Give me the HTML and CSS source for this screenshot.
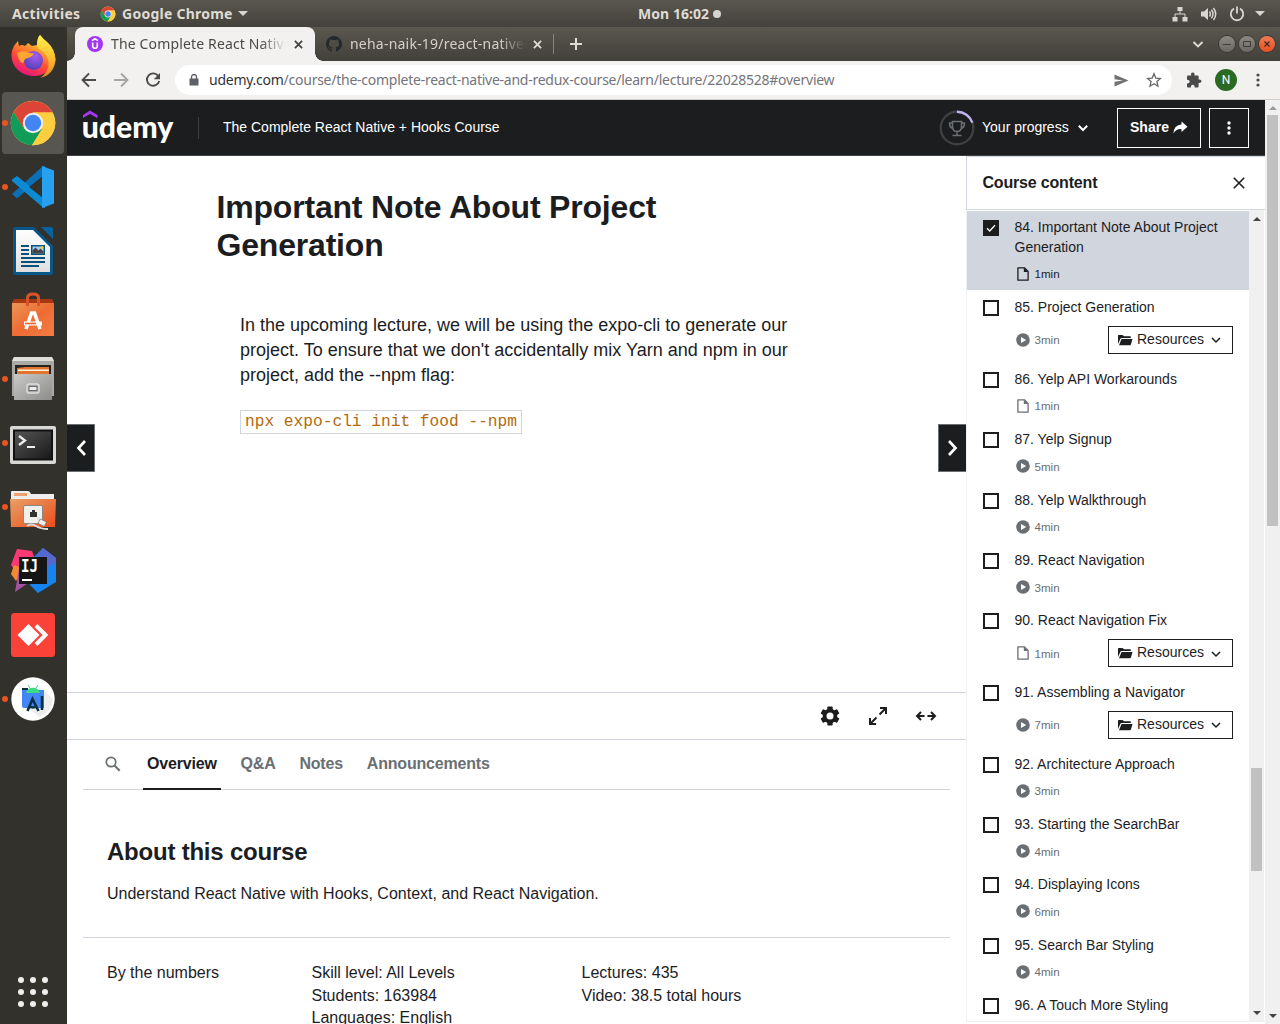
FILE: index.html
```html
<!DOCTYPE html>
<html lang="en">
<head>
<meta charset="utf-8">
<title>The Complete React Native + Hooks Course</title>
<link rel="stylesheet" href="styles.css">
</head>
<body>
<svg class="defs" width="0" height="0" aria-hidden="true">
  <defs>
    <linearGradient id="ffo" x1="0.8" y1="0" x2="0.3" y2="1"><stop offset="0" stop-color="#fff44f"/><stop offset=".35" stop-color="#ffa22b"/><stop offset=".65" stop-color="#ff4b38"/><stop offset="1" stop-color="#e3127f"/></linearGradient>
    <linearGradient id="ffy" x1="0.5" y1="0" x2="0.5" y2="1"><stop offset="0" stop-color="#fff54a"/><stop offset="1" stop-color="#ff9a22"/></linearGradient>
    <radialGradient id="ffp" cx=".6" cy=".25" r=".8"><stop offset="0" stop-color="#a65bf0"/><stop offset="1" stop-color="#4e3fb6"/></radialGradient>
    <linearGradient id="bag" x1="0" y1="0" x2="1" y2="1"><stop offset="0" stop-color="#eb9654"/><stop offset=".5" stop-color="#ee6c34"/><stop offset="1" stop-color="#f57c46"/></linearGradient>
    <linearGradient id="metal" x1="0" y1="0" x2="1" y2="1"><stop offset="0" stop-color="#c9c9c7"/><stop offset="1" stop-color="#8c8c8a"/></linearGradient>
    <linearGradient id="term" x1="0" y1="0" x2="1" y2="1"><stop offset="0" stop-color="#555"/><stop offset="1" stop-color="#191919"/></linearGradient>
    <linearGradient id="fold" x1="0" y1="0" x2="1" y2="1"><stop offset="0" stop-color="#e8a067"/><stop offset="1" stop-color="#ea4d1b"/></linearGradient>
    <linearGradient id="page" x1="0" y1="0" x2="0" y2="1"><stop offset="0" stop-color="#fff"/><stop offset="1" stop-color="#dedede"/></linearGradient>
    <symbol id="i-chrome" viewBox="0 0 48 48">
      <circle cx="24" cy="24" r="22.3" fill="#ffcd40"/>
      <path d="M4.7 13A22.3 22.3 0 0 1 43.5 13.4H24L14.5 29.5Z" fill="#db4437"/>
      <path d="M4.7 13A22.3 22.3 0 0 0 23 46.3L33.5 29.5 24 34 14.6 29.3Z" fill="#0f9d58"/>
      <path d="M24 13.4h19.5A22.3 22.3 0 0 1 23 46.3l10.5-17Z" fill="#ffcd40"/>
      <circle cx="24" cy="24" r="10.2" fill="#f1f1f1"/><circle cx="24" cy="24" r="8.2" fill="#4285f4"/>
    </symbol>
    <symbol id="i-down" viewBox="0 0 10 10"><path d="M1 3l4 4 4-4" fill="none" stroke="currentColor" stroke-width="1.5"/></symbol>
    <symbol id="i-x" viewBox="0 0 10 10"><path d="M1 1l8 8M9 1l-8 8" fill="none" stroke="currentColor" stroke-width="2"/></symbol>
    <symbol id="i-play" viewBox="0 0 14 14"><circle cx="7" cy="7" r="6.8" fill="#6a6f73"/><path d="M5 3.900v6.200L10.200 7z" fill="#fff"/></symbol>
    <symbol id="i-file" viewBox="0 0 14 14"><path d="M1.900.8h6.500l3.700 3.700v8.700H1.900z" fill="none" stroke="currentColor" stroke-width="1.300" stroke-linejoin="round"/><path d="M7.800.7l4.200 4.200H7.800z" fill="currentColor"/></symbol>
    <symbol id="i-folder" viewBox="0 0 15 12"><path d="M0 10V1.600Q0 .9.700.9H4.500l1.500 1.400h6q.8 0 .8.700V4H3.700Q2.700 4 2.300 4.900z" fill="#1c1d1f"/><path d="M3.500 5h11L12.900 10.600q-.2.600-.9.600H1z" fill="#1c1d1f"/></symbol>
  </defs>
</svg>

<header class="topbar">
  <span class="activities">Activities</span>
  <svg class="tb-chrome" width="16" height="16"><use href="#i-chrome"/></svg>
  <span class="appname">Google Chrome</span>
  <i class="tri tb-tri"></i>
  <div class="clock"><span>Mon 16:02</span><i></i></div>
  <div class="tray">
    <svg width="16" height="16" viewBox="0 0 16 16" fill="#d6d5d1"><path d="M5.500 1h5v4h-5zM.5 11h5v4.500h-5zM10.500 11h5v4.500h-5z"/><path d="M8 4v4M3 11V8h10v3" fill="none" stroke="#d6d5d1"/></svg>
    <svg width="17" height="16" viewBox="0 0 17 16"><path d="M1 5.500h3L8 2v12l-4-3.500H1z" fill="#d6d5d1"/><path d="M9.500 5.500q1.800 2.500 0 5M11.500 3.800q3 4.200 0 8.400M13.500 2q4.400 6 0 12" fill="none" stroke="#d6d5d1" stroke-width="1.500"/></svg>
    <svg width="16" height="16" viewBox="0 0 16 16"><path d="M5 2.600a6.200 6.200 0 1 0 6 0M8 .5v7" fill="none" stroke="#d6d5d1" stroke-width="1.800"/></svg>
    <i class="tri"></i>
  </div>
</header>

<div class="desktop">
<nav class="dock">
  <div class="slot"><svg viewBox="0 0 48 48"><path d="M5 11q2-3 4-5l1 5q3-2 6 0l3-3 4 3 5-1q0-7 3-10 3 4 7 7 8 7 8.500 18A22.300 20.500 0 1 1 5 11z" fill="url(#ffo)"/><path d="M28 11q0-8 3-11 3 4 7 7 8 7 8.500 18-1 14-15 18 9-7 8-16-1-8-8-12-3-2-3.500-4z" fill="url(#ffy)" opacity=".85"/><circle cx="24.500" cy="25.500" r="9.500" fill="url(#ffp)"/><path d="M8 18q6-3 11-.5 4 1 6 1-2 4-8 5-2 1-3 5-5-3-6-10.500z" fill="#ffa531"/></svg></div>
  <div class="slot active running"><svg viewBox="0 0 48 48"><use href="#i-chrome"/></svg></div>
  <div class="slot running"><svg viewBox="0 0 48 48"><path d="M3 31l5 4.500 28-24V3L34 3z" fill="#0a6fb4"/><path d="M3 16.500l5-3.500 28 22.500V45l-2-.5L3 18z" fill="#0d8ad4"/><path d="M34 13L20 24l14 11z" fill="#32312c"/><path d="M33 3l12 4.500v33L33 45z" fill="#27a0f0"/></svg></div>
  <div class="slot"><svg viewBox="0 0 48 48"><path d="M4 2q0-2 2-2h19l19 19v27q0 2-2 2H6q-2 0-2-2z" fill="#07568a"/><path d="M7 3h17l17 17v25H7z" fill="url(#page)"/><path d="M32 0h10q2 0 2 2v10z" fill="#07639c"/><g stroke="#08517d" stroke-width="2"><path d="M12 19h8M12 23h8M12 27h8M12 31h24M12 35h24M12 39h18"/></g><path d="M22 18h14v10H22z" fill="#08517d"/><path d="M23.500 19.500h11v7h-11z" fill="#a5d3ef"/><path d="M23.500 26.500v-3l3-3 3 3 2-2 3 3v2z" fill="#444"/><circle cx="33" cy="20.500" r="1.500" fill="#f5c543"/></svg></div>
  <div class="slot"><svg viewBox="0 0 48 48"><path d="M5 8h38l2 4H3z" fill="#a83713"/><path d="M3 12h42v33H3z" fill="url(#bag)"/><path d="M18.500 15V7q0-4 5.500-4t5.500 4v8" fill="none" stroke="#d9532a" stroke-width="3"/><path d="M17 38l5.500-16h3L31 38" fill="none" stroke="#fff" stroke-width="3.600"/><path d="M15 30.500h18v4H15z" fill="#fff"/><path d="M16 31.700h11v1.600H16z" fill="#ee6029"/></svg></div>
  <div class="slot running"><svg viewBox="0 0 48 48"><path d="M5 2h38l2 4v35H3V6z" fill="#a9a9a6"/><path d="M5 2h38l2 4H3z" fill="#dededa"/><path d="M6 10h36v10H6z" fill="#242424"/><path d="M8 13l8-1h24v8H8z" fill="#e0762e"/><path d="M9 14.500h31V16H9z" fill="#fff3df"/><path d="M5 19h38v26H5z" fill="url(#metal)"/><rect x="18" y="29" width="12" height="9" rx="2" fill="#aaa" stroke="#ddd" stroke-width="1.500"/><path d="M20 31.500h8v4h-8z" fill="#eee" stroke="#666"/></svg></div>
  <div class="slot running"><svg viewBox="0 0 48 48"><rect x="1" y="7" width="46" height="38" rx="2" fill="#d8d8d6"/><rect x="4" y="10.500" width="40" height="31" fill="#111"/><rect x="6" y="12.500" width="36" height="27" fill="url(#term)"/><path d="M10 17l6 4.500-6 4.500" fill="none" stroke="#eee" stroke-width="2.200"/><path d="M18 28h8" stroke="#eee" stroke-width="2"/></svg></div>
  <div class="slot running"><svg viewBox="0 0 48 48"><path d="M2 9q0-1 1-1h16q2 0 3 3h23v10H2z" fill="#eee"/><path d="M5 10h13v3H5z" fill="#eda06f"/><path d="M1 16h46l-1 28H2z" fill="url(#fold)"/><rect x="14.500" y="22.500" width="19" height="18" rx="1.500" fill="#f1f0ec" stroke="#888"/><path d="M21 34v-5h2v-2h3v2h2v5z" fill="#333"/><path d="M18 43q4-3 9 0t12 3M29 35l6 6" fill="none" stroke="#ddd" stroke-width="2"/><rect x="30" y="37" width="7" height="5" rx="1" fill="#eee" stroke="#777" stroke-width=".7" transform="rotate(25 33 39)"/></svg></div>
  <div class="slot"><svg viewBox="0 0 48 48"><path d="M8 2l15 2 5 13-24 4-2-3z" fill="#fb3a75"/><path d="M5 18l11 4-9 12-5-7z" fill="#f28a31"/><path d="M10 22l15 10-19 13z" fill="#a552a0"/><path d="M34 1l13 10v24L29 46l-8-8 4-28z" fill="#1683ef"/><path d="M34 1l13 10v4L24 30V14z" fill="#5867d0"/><path d="M10 10h28v27H10z" fill="#151515"/><path d="M13 32h10v2H13z" fill="#fff"/><text x="12" y="25" class="ij" textLength="17" lengthAdjust="spacingAndGlyphs">IJ</text></svg></div>
  <div class="slot"><svg viewBox="0 0 48 48"><rect x="2" y="2" width="44" height="44" rx="3.500" fill="#fb4238"/><path d="M8.500 24L19.500 13l11 11-11 11z" fill="#fff"/><path d="M27 14.500l9.500 9.500-9.500 9.500" fill="none" stroke="#fff" stroke-width="4"/></svg></div>
  <div class="slot running"><svg viewBox="0 0 48 48"><circle cx="24" cy="24" r="21.700" fill="#fff"/><path d="M35 15l9 9q-1 12-14 18l-11-9z" fill="#eee"/><path d="M13 13h6v5h-6z" fill="#073042"/><path d="M13 15h22v18H15q-2 0-2-2z" fill="#4285f4"/><path d="M17 18a7.200 7 0 0 1 14 0z" fill="#3ddc84"/><path d="M19 10l2 3M29 10l-2 3" stroke="#3ddc84"/><path d="M18.500 36l5-12 6 12M20 31q4 3 8 0M33 21v14" fill="none" stroke="#073042" stroke-width="2.600"/></svg></div>
  <div class="slot apps"><svg viewBox="0 0 48 48" fill="#eeeeec"><circle cx="12" cy="12" r="3"/><circle cx="24" cy="12" r="3"/><circle cx="36" cy="12" r="3"/><circle cx="12" cy="24" r="3"/><circle cx="24" cy="24" r="3"/><circle cx="36" cy="24" r="3"/><circle cx="12" cy="36" r="3"/><circle cx="24" cy="36" r="3"/><circle cx="36" cy="36" r="3"/></svg></div>
</nav>

<div class="browser">
  <div class="tabstrip">
    <div class="tab tab-on">
      <svg width="16" height="16" viewBox="0 0 16 16"><circle cx="8" cy="8" r="8" fill="#a435f0"/><path d="M5 4.600L8 2.800l3 1.800M5.700 6.500V10a2.300 2.300 0 0 0 4.600 0V6.500" fill="none" stroke="#fff" stroke-width="1.600"/></svg>
      <span class="tab-title">The Complete React Native</span>
      <svg class="tab-x" width="9" height="9"><use href="#i-x"/></svg>
    </div>
    <div class="tab tab-off">
      <svg width="16" height="16" viewBox="0 0 16 16"><path fill="#24292e" d="M8 0C3.580 0 0 3.580 0 8c0 3.540 2.290 6.530 5.470 7.590.4.070.550-.170.550-.380v-1.490c-2.010.370-2.530-.490-2.690-.940-.090-.230-.480-.940-.820-1.130-.280-.150-.680-.520-.010-.530.630-.010 1.080.580 1.230.820.720 1.210 1.870.870 2.330.660.070-.520.280-.870.510-1.070-1.780-.200-3.640-.890-3.640-3.950 0-.870.310-1.590.820-2.150-.080-.200-.360-1.020.080-2.120 0 0 .670-.210 2.200.820a7.600 7.600 0 0 1 4 0c1.530-1.040 2.200-.820 2.200-.820.440 1.100.160 1.920.080 2.120.510.560.820 1.270.820 2.150 0 3.070-1.870 3.750-3.650 3.950.290.250.540.730.540 1.480v2.190c0 .210.150.460.550.380A8 8 0 0 0 8 0z"/></svg>
      <span class="tab-title">neha-naik-19/react-native</span>
      <svg class="tab-x" width="9" height="9"><use href="#i-x"/></svg>
    </div>
    <svg class="plus" width="12" height="12" viewBox="0 0 12 12"><path d="M6 0v12M0 6h12" stroke="#dfdcd5" stroke-width="2"/></svg>
    <div class="winbtns">
      <svg width="12" height="12" viewBox="0 0 12 12"><path d="M1.500 4L6 8.500 10.500 4" fill="none" stroke="#dfdcd5" stroke-width="1.800"/></svg>
      <span class="wb"><svg width="16" height="16"><path d="M4 8.500h8" stroke="#3c3b37"/></svg></span>
      <span class="wb"><svg width="16" height="16"><path d="M4.500 5.500h7v5h-7z" fill="none" stroke="#3c3b37"/></svg></span>
      <span class="wb wb-close"><svg width="16" height="16"><path d="M5.500 5.500l5 5M10.500 5.500l-5 5" stroke="#3c2a20" stroke-width="1.200"/></svg></span>
    </div>
  </div>
  <div class="toolbar">
    <svg width="16" height="16" viewBox="0 0 16 16"><path d="M15 8H2M8 1.500L1.500 8 8 14.500" fill="none" stroke="#4a4a4a" stroke-width="1.800"/></svg>
    <svg width="16" height="16" viewBox="0 0 16 16"><path d="M1 8h13M8 1.500L14.500 8 8 14.500" fill="none" stroke="#a5a4a2" stroke-width="1.800"/></svg>
    <svg width="16" height="16" viewBox="0 0 16 16"><path d="M13.400 4.200A6.200 6.200 0 1 0 14.200 9" fill="none" stroke="#4a4a4a" stroke-width="1.900"/><path d="M15 1v6.200H8.800z" fill="#4a4a4a"/></svg>
    <div class="omnibox">
      <svg width="10" height="12" viewBox="0 0 10 12"><path d="M.5 4.500h9V11a.6.6 0 0 1-.6.600H1.100A.6.600 0 0 1 .5 11z" fill="#5c5f63"/><path d="M2.500 5V3a2.500 2.500 0 0 1 5 0v2" fill="none" stroke="#5c5f63" stroke-width="1.300"/></svg>
      <span class="url"><b>udemy.com</b>/course/the-complete-react-native-and-redux-course/learn/lecture/22028528#overview</span>
      <svg class="send" width="15" height="13" viewBox="0 0 15 13"><path d="M.5.500L14.500 6.500.5 12.500V7.700L9 6.500.5 5.300z" fill="#727272"/></svg>
      <svg width="16" height="16" viewBox="0 0 16 16"><path d="M8 1.800l1.800 4.300 4.700.4-3.600 3.100 1.100 4.600L8 11.800l-4 2.400 1.100-4.600L1.500 6.500l4.700-.4z" fill="none" stroke="#666" stroke-width="1.300"/></svg>
    </div>
    <svg class="puzzle" width="16" height="16" viewBox="0 0 16 16"><path d="M1 4.500q0-1 1-1h3.200q-.7-3 1.600-3t1.600 3h3.200q1 0 1 1v3q2.900-.3 2.900 1.700T12.600 11v3.500q0 1-1 1H8.700q.1-2.700-1.900-2.700t-1.900 2.700H2q-1 0-1-1v-3q2.700.1 2.700-1.900T1 7.700z" fill="#4a4a4a"/></svg>
    <span class="avatar">N</span>
    <svg class="kebab" width="4" height="14" viewBox="0 0 4 14" fill="#4a4a4a"><circle cx="2" cy="2" r="1.600"/><circle cx="2" cy="7" r="1.600"/><circle cx="2" cy="12" r="1.600"/></svg>
  </div>

  <div class="viewport">
  <div class="page">
    <header class="course-head">
      <svg class="logo" width="94" height="36" viewBox="0 0 94 36"><path d="M1 8V5l7-4.500L15.500 5v3.200L8 4z" fill="#a435f0"/><text x="-.3" y="28" textLength="91.500" lengthAdjust="spacingAndGlyphs">udemy</text></svg>
      <i class="vline"></i>
      <span class="course-name">The Complete React Native + Hooks Course</span>
      <svg class="trophy" width="36" height="36" viewBox="0 0 36 36"><circle cx="18" cy="18" r="16.300" fill="none" stroke="#3e4143" stroke-width="2.400"/><path d="M18 1.700A16.300 16.300 0 0 1 33.400 12.600" fill="none" stroke="#c0b2f0" stroke-width="2.400"/><path d="M13.500 11.500h9v5q0 5-4.500 5t-4.500-5zM13.500 13h-3q0 5 4 5.500M22.500 13h3q0 5-4 5.500M18 21.500V25M13.500 25.500h9" fill="none" stroke="#6a6f73" stroke-width="1.500"/></svg>
      <span class="progress">Your progress</span>
      <svg class="chev" width="10" height="10" viewBox="0 0 10 10"><path d="M.8 2.800L5 7l4.200-4.200" fill="none" stroke="#fff" stroke-width="2"/></svg>
      <span class="hbtn share">Share <svg width="15" height="13" viewBox="0 0 15 13"><path d="M8.500.5l6 5.200-6 5.200V8Q3 7.500.5 12.500.7 4 8.500 3.500z" fill="#fff"/></svg></span>
      <span class="hbtn more"><svg width="4" height="14" viewBox="0 0 4 14" fill="#fff"><circle cx="2" cy="2" r="1.700"/><circle cx="2" cy="7" r="1.700"/><circle cx="2" cy="12" r="1.700"/></svg></span>
    </header>
    <div class="columns">
      <main class="main">
        <section class="lecture">
          <h1>Important Note About Project Generation</h1>
          <p>In the upcoming lecture, we will be using the expo-cli to generate our project. To ensure that we don't accidentally mix Yarn and npm in our project, add the --npm flag:</p>
          <code>npx expo-cli init food --npm</code>
          <span class="nav prev"><svg width="12" height="18" viewBox="0 0 12 18"><path d="M10 2L3.500 9l6.500 7" fill="none" stroke="#fff" stroke-width="2.700"/></svg></span>
          <span class="nav next"><svg width="12" height="18" viewBox="0 0 12 18"><path d="M2 2l6.500 7L2 16" fill="none" stroke="#fff" stroke-width="2.700"/></svg></span>
        </section>
        <div class="controls">
          <svg width="20" height="20" viewBox="0 0 20 20"><g fill="#1c1d1f"><circle cx="10" cy="10" r="7.300"/><rect x="7.300" y=".5" width="5.400" height="19" rx="1"/><rect x="7.300" y=".5" width="5.400" height="19" rx="1" transform="rotate(60 10 10)"/><rect x="7.300" y=".5" width="5.400" height="19" rx="1" transform="rotate(120 10 10)"/></g><circle cx="10" cy="10" r="3.500" fill="#fff"/></svg>
          <svg width="20" height="20" viewBox="0 0 20 20"><path d="M12 2h6v6M17.500 2.500l-6 6M2 12v6h6M2.500 17.500l6-6" fill="none" stroke="#1c1d1f" stroke-width="2"/></svg>
          <svg width="22" height="12" viewBox="0 0 22 12"><path d="M9.500 6H2M6 2L2 6l4 4M12.500 6H20M16 2l4 4-4 4" fill="none" stroke="#1c1d1f" stroke-width="2"/></svg>
        </div>
        <nav class="tabs">
          <svg width="16" height="16" viewBox="0 0 16 16"><circle cx="6" cy="6" r="4.700" fill="none" stroke="#6a6f73" stroke-width="1.700"/><path d="M9.500 9.500l5.200 5.200" stroke="#6a6f73" stroke-width="2.100"/></svg>
          <span class="on">Overview</span><span>Q&amp;A</span><span>Notes</span><span>Announcements</span>
        </nav>
        <section class="about">
          <h2>About this course</h2>
          <p>Understand React Native with Hooks, Context, and React Navigation.</p>
        </section>
        <section class="numbers">
          <div>By the numbers</div>
          <div>Skill level: All Levels<br>Students: 163984<br>Languages: English</div>
          <div>Lectures: 435<br>Video: 38.5 total hours</div>
        </section>
      </main>
      <aside class="side">
        <div class="side-head"><span>Course content</span><svg width="12" height="12" viewBox="0 0 12 12"><path d="M.8.800l10.400 10.400M11.200.800L.8 11.200" stroke="#1c1d1f" stroke-width="1.600"/></svg></div>
        <div class="side-body">
        <div class="list">
          <div class="item current"><i class="box"><svg width="16" height="16"><path d="M4 8.300l2.700 2.700L12 5.300" fill="none" stroke="#fff" stroke-width="1.300"/></svg></i><div class="info"><div class="t">84. Important Note About Project Generation</div><div class="meta"><svg><use href="#i-file"/></svg><span>1min</span></div></div></div>
          <div class="item"><i class="box"></i><div class="info"><div class="t">85. Project Generation</div><div class="meta"><svg><use href="#i-play"/></svg><span>3min</span><b class="res"><svg class="fo"><use href="#i-folder"/></svg>Resources<svg class="dn"><use href="#i-down"/></svg></b></div></div></div>
          <div class="item"><i class="box"></i><div class="info"><div class="t">86. Yelp API Workarounds</div><div class="meta"><svg><use href="#i-file"/></svg><span>1min</span></div></div></div>
          <div class="item"><i class="box"></i><div class="info"><div class="t">87. Yelp Signup</div><div class="meta"><svg><use href="#i-play"/></svg><span>5min</span></div></div></div>
          <div class="item"><i class="box"></i><div class="info"><div class="t">88. Yelp Walkthrough</div><div class="meta"><svg><use href="#i-play"/></svg><span>4min</span></div></div></div>
          <div class="item"><i class="box"></i><div class="info"><div class="t">89. React Navigation</div><div class="meta"><svg><use href="#i-play"/></svg><span>3min</span></div></div></div>
          <div class="item"><i class="box"></i><div class="info"><div class="t">90. React Navigation Fix</div><div class="meta"><svg><use href="#i-file"/></svg><span>1min</span><b class="res"><svg class="fo"><use href="#i-folder"/></svg>Resources<svg class="dn"><use href="#i-down"/></svg></b></div></div></div>
          <div class="item"><i class="box"></i><div class="info"><div class="t">91. Assembling a Navigator</div><div class="meta"><svg><use href="#i-play"/></svg><span>7min</span><b class="res"><svg class="fo"><use href="#i-folder"/></svg>Resources<svg class="dn"><use href="#i-down"/></svg></b></div></div></div>
          <div class="item"><i class="box"></i><div class="info"><div class="t">92. Architecture Approach</div><div class="meta"><svg><use href="#i-play"/></svg><span>3min</span></div></div></div>
          <div class="item"><i class="box"></i><div class="info"><div class="t">93. Starting the SearchBar</div><div class="meta"><svg><use href="#i-play"/></svg><span>4min</span></div></div></div>
          <div class="item"><i class="box"></i><div class="info"><div class="t">94. Displaying Icons</div><div class="meta"><svg><use href="#i-play"/></svg><span>6min</span></div></div></div>
          <div class="item"><i class="box"></i><div class="info"><div class="t">95. Search Bar Styling</div><div class="meta"><svg><use href="#i-play"/></svg><span>4min</span></div></div></div>
          <div class="item"><i class="box"></i><div class="info"><div class="t">96. A Touch More Styling</div></div></div>
        </div>
        <div class="bar"><i class="up"></i><i class="thumb side-thumb"></i><i class="dw"></i></div>
        </div>
      </aside>
    </div>
  </div>
  <div class="bar page-bar"><i class="up dim"></i><i class="thumb page-thumb"></i><i class="dw"></i></div>
  </div>
</div>
</div>
</body>
</html>
```
FILE: styles.css
```css
* { box-sizing: border-box; }
html, body { margin: 0; height: 1024px; overflow: hidden; }
body { width: 1280px; font-family: "Liberation Sans", Arial, sans-serif; color: #1c1d1f; background: #fff; }
svg { display: block; flex: none; }
i { flex: none; font-style: normal; }
h1, h2, p { margin: 0; }
.defs { position: absolute; }

/* system bar */
.topbar { height: 27px; display: flex; align-items: center; background: linear-gradient(#5a574f, #43413b); color: #dfdbd2; font: bold 14px/27px "Noto Sans", sans-serif; padding: 0 12px; white-space: nowrap; }
.activities { width: 88px; letter-spacing: 0.350px; }
.appname { width: 112px; margin-left: 6px; letter-spacing: 0.250px; }
.tri { border: 5px solid transparent; border-top-color: #d6d5d1; border-bottom: 0; }
.tb-tri { margin-left: 4px; }
.clock { margin-left: 390px; display: flex; align-items: center; width: 90px; gap: 4px; }
.clock span { width: 71px; letter-spacing: 0.050px; }
.clock i { width: 8px; height: 8px; border-radius: 50%; background: #d6d5d1; }
.tray { margin-left: auto; display: flex; align-items: center; gap: 12px; margin-right: 3px; }
.tray .tri { margin-left: -2px; }

/* launcher */
.desktop { display: flex; height: 997px; }
.dock { width: 67px; background: #32312c; display: flex; flex-direction: column; }
.slot { position: relative; height: 64px; display: flex; align-items: center; justify-content: center; padding-right: 1px; }
.slot svg { width: 48px; height: 48px; }
.slot.active { background: #575651; margin: 1px 3px 1px 2px; padding: 0; height: 62px; border-radius: 4px; }
.running::before { content: ""; position: absolute; left: 2px; top: 29px; width: 6px; height: 6px; border-radius: 50%; background: #e95420; }
.active.running::before { left: 0; top: 28px; }
.apps { margin-top: auto; }
.ij { font: bold 17px "DejaVu Sans Mono", monospace; fill: #fff; }

/* browser frame */
.browser { flex: 1; display: flex; flex-direction: column; min-width: 0; }
.tabstrip { height: 34px; display: flex; align-items: stretch; padding-left: 8px; background: linear-gradient(#5a574f, #42403a); font: 14px/34px "Noto Sans", sans-serif; }
.tab { display: flex; align-items: center; width: 240px; padding-left: 12px; position: relative; color: #4c4a46; }
.tab-on { background: #f2f1f0; border-radius: 8px 8px 0 0; }
.tab-on::before, .tab-on::after { content: ""; position: absolute; bottom: 0; width: 8px; height: 8px; }
.tab-on::before { left: -8px; background: radial-gradient(circle at 0 0, transparent 7.5px, #f2f1f0 8px); }
.tab-on::after { right: -8px; background: radial-gradient(circle at 100% 0, transparent 7.5px, #f2f1f0 8px); }
.tab-title { width: 175px; margin-left: 8px; overflow: hidden; white-space: nowrap; letter-spacing: 0.150px; -webkit-mask-image: linear-gradient(90deg, #000 150px, transparent 175px); mask-image: linear-gradient(90deg, #000 150px, transparent 175px); }
.tab-x { margin-left: 8px; color: #454440; }
.tab-off { color: #d5d1c8; width: 239px; padding-left: 11px; }
.tab-off .tab-title { letter-spacing: 0.220px; }
.tab-off::after { content: ""; position: absolute; right: 0; top: 7px; height: 20px; width: 1px; background: #87847c; }
.tab-off .tab-x { color: #dfdcd5; }
.plus { margin: 11px 0 0 16px; }
.winbtns { margin-left: auto; display: flex; align-items: center; gap: 4px; padding-right: 5px; }
.winbtns > svg { margin-right: 11px; }
.wb { width: 16px; height: 16px; border-radius: 50%; background: linear-gradient(#8b8982, #6a6861); box-shadow: 0 0 0 1px #3a3934; }
.wb-close { background: linear-gradient(#f27b55, #e65020); }

.toolbar { height: 39px; background: #f2f1f0; border-bottom: 1px solid #d0cfce; display: flex; align-items: center; padding: 0 20px 0 14px; }
.toolbar > svg:nth-child(-n+3) { margin-right: 16px; }
.omnibox { width: 997px; height: 30px; margin-left: -2px; border-radius: 15px; background: #fff; display: flex; align-items: center; padding: 0 10px 0 14px; }
.url { margin-left: 10px; font: 14px/30px "Noto Sans", sans-serif; color: #74747a; white-space: nowrap; letter-spacing: -0.252px; }
.url b { font-weight: normal; color: #333; }
.send { margin-left: auto; margin-right: 17px; }
.puzzle { margin-left: 14px; }
.avatar { width: 22px; height: 22px; margin-left: 13px; border-radius: 50%; background: #2b6a23; color: #fff; font: 12px/22px Roboto, sans-serif; text-align: center; }
.kebab { margin-left: auto; }

/* course page */
.viewport { display: flex; height: 924px; }
.page { width: 1198px; }
.course-head { height: 56px; background: #1c1d1f; border-bottom: 1px solid #3e4143; color: #fff; display: flex; align-items: center; padding: 0 16px 0 15px; font-size: 14px; white-space: nowrap; }
.logo text { font: 900 31px Lato, sans-serif; fill: #fff; }
.vline { width: 1px; height: 22px; background: #3e4143; margin: 0 24px 0 22px; }
.course-name, .progress { padding-bottom: 2px; }
.trophy { margin-left: auto; }
.progress { margin-left: 7px; width: 88px; }
.chev { margin: 1px 29px 0 8px; }
.hbtn { height: 40px; border: 1px solid #fff; display: flex; align-items: center; justify-content: center; font-weight: bold; }
.share { width: 84px; gap: 4px; margin-right: 8px; padding-bottom: 1px; }
.more { width: 40px; }

.columns { display: flex; height: 868px; overflow: hidden; }
.main { width: 899px; }
.lecture { height: 536px; position: relative; padding: 32px 0 0 173px; }
h1 { margin-left: -23.500px; width: 480px; font-size: 32px; line-height: 38.400px; letter-spacing: -0.190px; }
.lecture p { margin-top: 48px; width: 575px; font-size: 18px; line-height: 25.200px; }
.lecture code { display: inline-block; margin-top: 22px; height: 24px; padding: 0 4px; border: 1px solid #d1d7dc; color: #b4690e; font: 16.200px/22px "Liberation Mono", monospace; white-space: nowrap; }
.nav { position: absolute; top: 268px; width: 28px; height: 48px; background: #1c1d1f; border: 1px solid #6a6f73; display: flex; align-items: center; justify-content: center; }
.prev { left: 0; border-left: 0; }
.next { right: 0; border-right: 0; }
.controls { height: 48px; border: solid #d1d5de; border-width: 1px 0; display: flex; align-items: center; justify-content: flex-end; gap: 28px; padding-right: 29px; }
.controls svg:last-child { margin-left: -1px; }
.tabs { height: 50px; margin: 0 16px; border-bottom: 1px solid #d1d5db; display: flex; padding-left: 22px; font-size: 16px; font-weight: bold; color: #6a6f73; line-height: 47px; letter-spacing: -0.190px; }
.tabs svg { margin: 16px 22px 0 0; }
.tabs span { padding: 0 4px; margin-right: 15.900px; height: 50px; }
.tabs .on { color: #1c1d1f; border-bottom: 2px solid #1c1d1f; }
.about { height: 148px; margin: 0 16px; padding: 47px 24px 0; border-bottom: 1px solid #d1d7dc; }
h2 { font-size: 24px; line-height: 29px; letter-spacing: -0.220px; }
.about p { margin-top: 17px; font-size: 16px; line-height: 22.400px; }
.numbers { display: flex; margin: 0 16px; padding: 24.400px 24px 0; font-size: 16px; line-height: 22.400px; white-space: nowrap; }
.numbers div { width: 270px; }
.numbers div:first-child { width: 204.500px; }

/* curriculum */
.side { width: 299px; border: 1px solid #f0f1f3; border-right: 0; height: 866px; }
.side-head { height: 54px; margin: -1px 0 0 -1px; border: 1px solid #d1d7dc; border-right: 0; display: flex; align-items: center; justify-content: space-between; padding: 0 20px 0 15.500px; font-weight: bold; font-size: 16px; letter-spacing: -0.180px; }
.side-body { display: flex; height: 811px; overflow: hidden; }
.list { width: 282px; padding-top: 0.300px; }
.item { display: flex; padding: 8px 16px; }
.current { background: #d1d5de; border-top: 1px solid #fff; padding-top: 7px; }
.box { width: 16px; height: 16px; margin-top: 2px; border: 2px solid #1c1d1f; }
.current .box { background: #1c1d1f; border: 0; }
.info { flex: 1; margin-left: 15.500px; }
.t { font-size: 14px; line-height: 19.600px; margin-right: -8px; }
.meta { min-height: 16.800px; margin-top: 8px; display: flex; align-items: center; font-size: 11.600px; color: #6a6f73; padding-left: 1px; }
.meta > svg { width: 14px; height: 14px; margin-right: 5px; }
.current .meta { color: #1c1d1f; }
.res { margin-left: auto; width: 125px; height: 28px; border: 1px solid #1c1d1f; display: flex; align-items: center; font-size: 14px; font-weight: normal; color: #1c1d1f; padding: 0 0 2px 9px; }
.fo { width: 15px; height: 12px; margin: 2px 4px 0 0; }
.dn { width: 10px; height: 10px; margin: 3px 0 0 7px; }

/* scrollbars */
.bar { width: 15px; background: #f0f0f0; display: flex; flex-direction: column; align-items: center; }
.bar .up, .bar .dw { border: 4px solid transparent; }
.bar .up { border-bottom-color: #444; border-top: 0; margin-top: 7px; }
.bar .up.dim { border-bottom-color: #9b9b9b; }
.bar .dw { border-top-color: #444; border-bottom: 0; margin: auto 0 6px; }
.thumb { width: 11px; background: #c1c1c1; }
.side-thumb { height: 103px; margin-top: 547px; }
.page-bar { height: 924px; }
.page-bar .up { margin-top: 6px; }
.page-thumb { height: 411px; margin-top: 5px; }
```
